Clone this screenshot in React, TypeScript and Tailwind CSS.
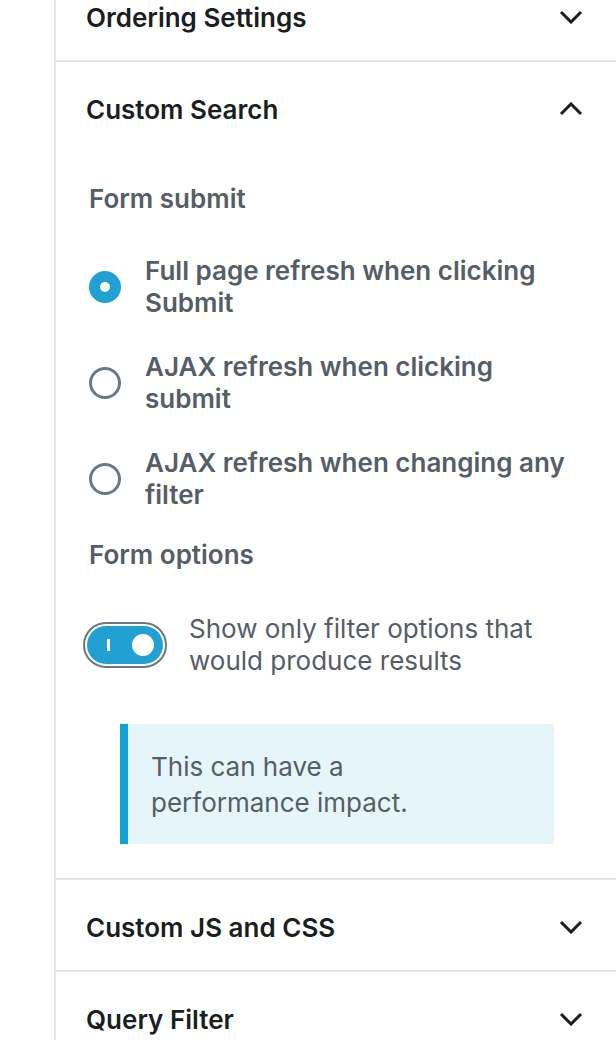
const Chevron = ({ up = false }: { up?: boolean }) => (
  <svg width="24" height="14" viewBox="0 0 24 14" className="shrink-0">
    <polyline
      points={up ? "2,12 12,2 22,12" : "2,2 12,12 22,2"}
      fill="none"
      stroke="#191e23"
      strokeWidth="3"
    />
  </svg>
);

const PanelHeader = ({ title, open = false }: { title: string; open?: boolean }) => (
  <div className="flex h-[90px] items-center justify-between pl-[30px] pr-[33px] pt-[4px]">
    <span className="text-[26px] font-semibold text-[#191e23]">{title}</span>
    <Chevron up={open} />
  </div>
);

const Radio = ({ checked, children }: { checked?: boolean; children: React.ReactNode }) => (
  <div className="flex items-center gap-[24px]">
    {checked ? (
      <span className="flex h-8 w-8 shrink-0 items-center justify-center rounded-full bg-[#21a1d3]">
        <span className="h-[10px] w-[10px] rounded-full bg-white" />
      </span>
    ) : (
      <span className="h-8 w-8 shrink-0 rounded-full border-[3px] border-[#6c7781]" />
    )}
    <span className="text-[26px] font-semibold leading-8 text-[#555d66]">{children}</span>
  </div>
);

export default function App() {
  return (
    <div
      className="h-[1040px] w-[616px] overflow-hidden bg-white"
      style={{ fontFamily: "Inter, 'Noto Sans', sans-serif" }}
    >
      <div className="ml-[54px] -mt-[30px] border-l-2 border-[#e2e4e7]">
        <PanelHeader title="Ordering Settings" />

        <div className="border-t-2 border-[#e2e4e7]">
          <PanelHeader title="Custom Search" open />
          <div className="pl-[33px] pr-[32px] pt-[31px] pb-[34px]">
            <div className="text-[26px] font-semibold leading-8 text-[#555d66]">Form submit</div>

            <div className="mt-10 flex flex-col gap-8">
              <Radio checked>Full page refresh when clicking Submit</Radio>
              <Radio>AJAX refresh when clicking submit</Radio>
              <Radio>AJAX refresh when changing any filter</Radio>
            </div>

            <div className="mt-7 text-[26px] font-semibold leading-8 text-[#555d66]">Form options</div>

            <div className="mt-[42px] flex items-center gap-[22px]">
              <div className="-ml-[6px] flex h-[46px] w-[84px] shrink-0 items-center rounded-full border-2 border-[#6c7781] p-[2px]">
                <div className="relative flex h-full w-full items-center rounded-full bg-[#21a1d3]">
                  <span className="absolute left-[20px] h-[12px] w-[3px] bg-white" />
                  <span className="absolute right-[9px] h-[22px] w-[22px] rounded-full bg-white" />
                </div>
              </div>
              <span className="text-[26px] leading-8 text-[#555d66]">
                Show only filter options that would produce results
              </span>
            </div>

            <div className="ml-[31px] mr-[30px] mt-[47px] border-l-8 border-[#13a2d5] bg-[#e5f5fa] pl-[23px] pt-[25px] pb-[23px]">
              <p className="max-w-[300px] text-[26px] leading-9 text-[#555d66]">
                This can have a performance impact.
              </p>
            </div>
          </div>
        </div>

        <div className="border-t-2 border-[#e2e4e7]">
          <PanelHeader title="Custom JS and CSS" />
        </div>
        <div className="border-t-2 border-[#e2e4e7]">
          <PanelHeader title="Query Filter" />
        </div>
      </div>
    </div>
  );
}
